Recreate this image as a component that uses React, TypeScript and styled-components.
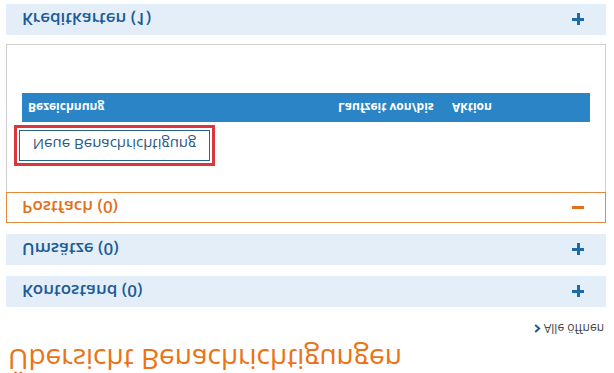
import styled, { createGlobalStyle } from "styled-components";

const GlobalStyle = createGlobalStyle`
  html, body {
    margin: 0;
    padding: 0;
    background: #ffffff;
  }
  body {
    font-family: "Open Sans", "Liberation Sans", Arial, sans-serif;
  }
`;

// the whole screen is shown upside down
const Page = styled.div`
  width: 614px;
  height: 373px;
  overflow: hidden;
  transform: scaleY(-1);
  background: #ffffff;
`;

const Title = styled.h1`
  margin: 0;
  padding: 0 0 0 8px;
  height: 36px;
  font-size: 28px;
  line-height: 27px;
  font-weight: 400;
  color: #ec7214;
  white-space: nowrap;
`;

const Toolbar = styled.div`
  display: flex;
  justify-content: flex-end;
  padding-right: 10px;
  height: 30px;
`;

const OpenAll = styled.a`
  display: flex;
  align-items: center;
  gap: 3px;
  height: 16px;
  font-size: 12px;
  color: #444;
  text-decoration: none;
`;

const List = styled.div`
  display: flex;
  flex-direction: column;
  gap: 11px;
  margin: 0 8px 0 6px;
`;

const Section = styled.div``;

const Head = styled.div<{ open?: boolean }>`
  display: flex;
  align-items: center;
  justify-content: space-between;
  height: 31px;
  box-sizing: border-box;
  font-size: 17px;
  font-weight: 600;
  background: ${(p) => (p.open ? "#ffffff" : "#e4eef8")};
  color: ${(p) => (p.open ? "#e3701a" : "#1b5c98")};
  border: ${(p) => (p.open ? "1px solid #e58a3c" : "none")};
  padding-left: ${(p) => (p.open ? "15px" : "16px")};
  padding-right: ${(p) => (p.open ? "21px" : "22px")};
`;

const Sign = styled.span<{ open?: boolean }>`
  position: relative;
  width: 12px;
  height: 12px;
  &::before,
  &::after {
    content: "";
    position: absolute;
    background: ${(p) => (p.open ? "#e3701a" : "#1e6aa8")};
  }
  &::before {
    left: 0;
    top: 4.5px;
    width: 12px;
    height: 3px;
  }
  &::after {
    display: ${(p) => (p.open ? "none" : "block")};
    left: 4.5px;
    top: 0;
    width: 3px;
    height: 12px;
  }
`;

const Body = styled.div`
  border: 1px solid #cfcfcf;
  border-top: none;
  height: 148px;
  box-sizing: border-box;
  padding: 31px 15px 0 12px;
  margin-bottom: -2px;
`;

const NewButton = styled.button`
  display: block;
  width: 191px;
  height: 31px;
  background: #ffffff;
  border: 1px solid #2d5f8c;
  outline: 3px solid #d9363e;
  outline-offset: 2px;
  color: #2b5a86;
  font-family: "Open Sans", "Liberation Sans", Arial, sans-serif;
  font-size: 15px;
  padding: 0;
  cursor: pointer;
`;

const Table = styled.div`
  margin: 8px 0 0 3px;
`;

const HeadRow = styled.div`
  display: grid;
  grid-template-columns: 310px 114px 1fr;
  align-items: center;
  height: 29px;
  padding-left: 6px;
  background: #2a84c6;
  color: #ffffff;
  font-size: 12px;
  font-weight: 700;
`;

const sections = [
  { title: "Kontostand (0)" },
  { title: "Umsätze (0)" },
  { title: "Postfach (0)", open: true },
  { title: "Kreditkarten (1)" },
];

export default function App() {
  return (
    <Page>
      <GlobalStyle />
      <Title>Übersicht Benachrichtigungen</Title>
      <Toolbar>
        <OpenAll href="#">
          <svg width="7" height="9" viewBox="0 0 7 9">
            <path d="M1.2 1 L5.2 4.5 L1.2 8" fill="none" stroke="#1d5a94" strokeWidth="2" />
          </svg>
          Alle öffnen
        </OpenAll>
      </Toolbar>
      <List>
        {sections.map((s) => (
          <Section key={s.title}>
            <Head open={s.open}>
              <span>{s.title}</span>
              <Sign open={s.open} />
            </Head>
            {s.open && (
              <Body>
                <NewButton>Neue Benachrichtigung</NewButton>
                <Table>
                  <HeadRow>
                    <span>Bezeichnung</span>
                    <span>Laufzeit von/bis</span>
                    <span>Aktion</span>
                  </HeadRow>
                </Table>
              </Body>
            )}
          </Section>
        ))}
      </List>
    </Page>
  );
}
